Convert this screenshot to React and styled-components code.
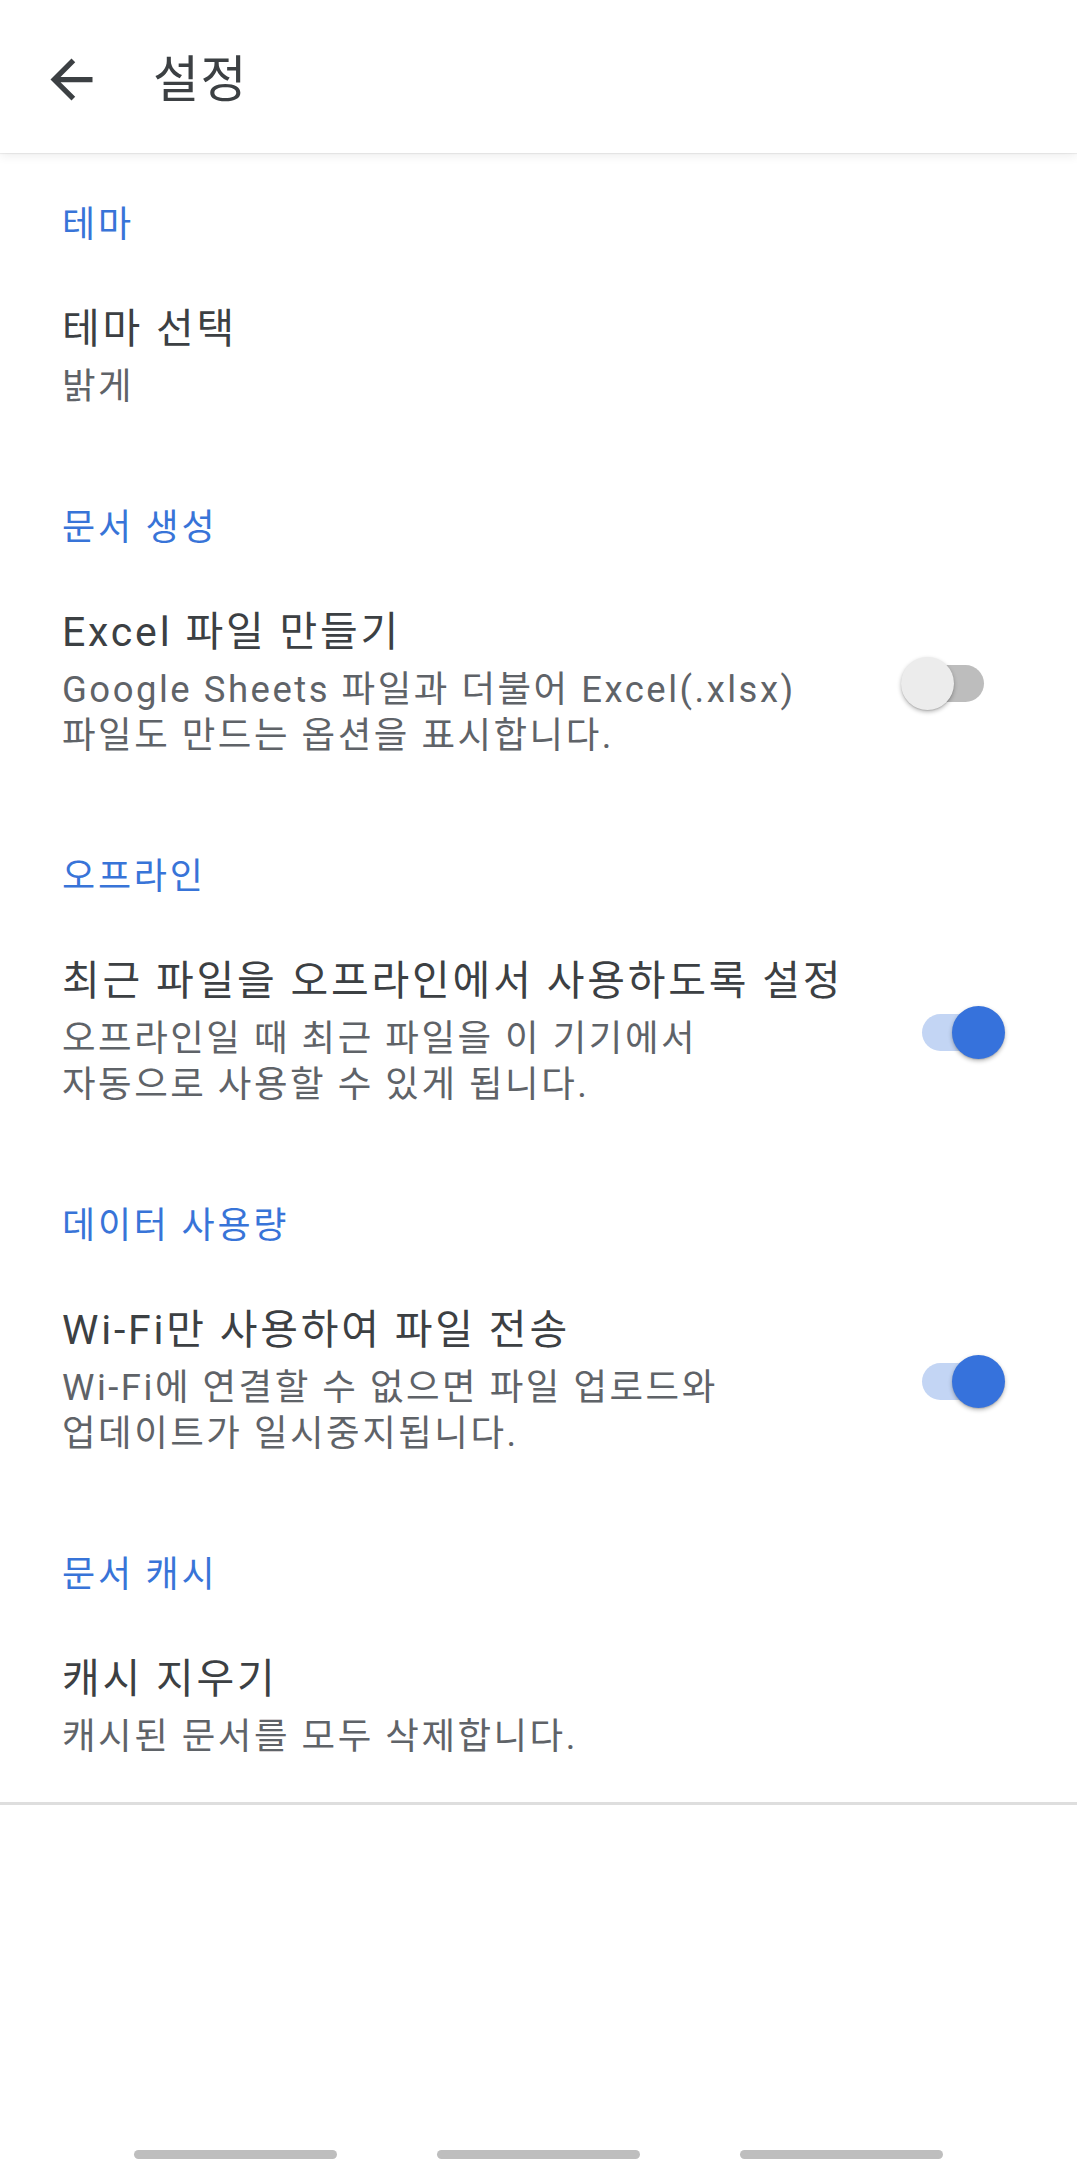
import React from "react";
import styled, { createGlobalStyle } from "styled-components";

const GlobalStyle = createGlobalStyle`
  html, body {
    margin: 0;
    padding: 0;
    background: #ffffff;
  }
  body {
    font-family: Roboto, "Noto Sans CJK KR", sans-serif;
    -webkit-font-smoothing: antialiased;
  }
`;

const TEXT = "#3c4043";
const SUB = "#5f6368";
const BLUE = "#3874d8";

const Page = styled.div`
  min-height: 100vh;
  display: flex;
  flex-direction: column;
  background: #ffffff;
`;

const Toolbar = styled.header`
  height: 153px;
  display: flex;
  align-items: center;
  padding: 6px 0 0 40px;
  box-sizing: border-box;
  background: #ffffff;
  box-shadow: 0 1px 1px rgba(0, 0, 0, 0.06), 0 3px 10px rgba(0, 0, 0, 0.07);
  position: relative;
  z-index: 1;
`;

const BackIcon = styled.svg`
  width: 63px;
  height: 63px;
  fill: ${TEXT};
  flex: none;
`;

const Title = styled.h1`
  margin: 0 0 0 50px;
  font-size: 50px;
  font-weight: 400;
  letter-spacing: 1.5px;
  color: ${TEXT};
  line-height: 1;
`;

const List = styled.main`
  display: flex;
  flex-direction: column;
  padding-top: 1px;
`;

const Category = styled.div`
  padding: 47px 62px 0;
  font-size: 36px;
  line-height: 48px;
  letter-spacing: 2.8px;
  color: ${BLUE};
`;

const Item = styled.div`
  display: flex;
  align-items: center;
  padding: 55px 72px ${(p) => (p.$last ? "42px" : "47px")} 62px;
`;

const Texts = styled.div`
  flex: 1;
  min-width: 0;
`;

const ItemTitle = styled.div`
  font-size: 41px;
  line-height: 50px;
  letter-spacing: 2.8px;
  color: ${TEXT};
  white-space: nowrap;
`;

const Summary = styled.div`
  margin-top: 10px;
  font-size: 36.5px;
  line-height: 46px;
  letter-spacing: 2.5px;
  color: ${SUB};
  white-space: nowrap;
`;

const SwitchBox = styled.div`
  position: relative;
  width: 104px;
  height: 53px;
  flex: none;
`;

const Track = styled.div`
  position: absolute;
  left: 21px;
  top: 8px;
  width: 62px;
  height: 37px;
  border-radius: 19px;
  background: ${(p) => (p.$on ? "#c3d5f4" : "#bdbdbd")};
`;

const Thumb = styled.div`
  position: absolute;
  top: 0;
  left: ${(p) => (p.$on ? "51px" : "0")};
  width: 53px;
  height: 53px;
  border-radius: 50%;
  background: ${(p) => (p.$on ? "#3672dc" : "#ececec")};
  box-shadow: 0 2px 4px rgba(0, 0, 0, 0.28), 0 1px 1px rgba(0, 0, 0, 0.1);
`;

const Divider = styled.hr`
  margin: 0;
  border: none;
  height: 3px;
  background: #dedede;
`;

const Spacer = styled.div`
  flex: 1;
`;

const NavBar = styled.div`
  display: flex;
  justify-content: center;
  gap: 100px;
  padding: 0 0 15px 0;
`;

const NavPill = styled.div`
  width: 203px;
  height: 9px;
  border-radius: 5px;
  background: #bebebe;
`;

function Switch({ on }) {
  return (
    <SwitchBox>
      <Track $on={on} />
      <Thumb $on={on} />
    </SwitchBox>
  );
}

const sections = [
  {
    name: "테마",
    title: "테마 선택",
    summary: ["밝게"],
  },
  {
    name: "문서 생성",
    title: "Excel 파일 만들기",
    summary: ["Google Sheets 파일과 더불어 Excel(.xlsx)", "파일도 만드는 옵션을 표시합니다."],
    toggle: false,
  },
  {
    name: "오프라인",
    title: "최근 파일을 오프라인에서 사용하도록 설정",
    summary: ["오프라인일 때 최근 파일을 이 기기에서", "자동으로 사용할 수 있게 됩니다."],
    toggle: true,
  },
  {
    name: "데이터 사용량",
    title: "Wi-Fi만 사용하여 파일 전송",
    summary: ["Wi-Fi에 연결할 수 없으면 파일 업로드와", "업데이트가 일시중지됩니다."],
    toggle: true,
  },
  {
    name: "문서 캐시",
    title: "캐시 지우기",
    summary: ["캐시된 문서를 모두 삭제합니다."],
  },
];

export default function App() {
  return (
    <Page>
      <GlobalStyle />
      <Toolbar>
        <BackIcon viewBox="0 0 24 24">
          <path d="M20 11H7.83l5.59-5.59L12 4l-8 8 8 8 1.41-1.41L7.83 13H20v-2z" />
        </BackIcon>
        <Title>설정</Title>
      </Toolbar>
      <List>
        {sections.map((s, i) => (
          <section key={s.name}>
            <Category>{s.name}</Category>
            <Item $last={i === sections.length - 1}>
              <Texts>
                <ItemTitle>{s.title}</ItemTitle>
                <Summary>
                  {s.summary.map((line) => (
                    <div key={line}>{line}</div>
                  ))}
                </Summary>
              </Texts>
              {s.toggle !== undefined && <Switch on={s.toggle} />}
            </Item>
          </section>
        ))}
        <Divider />
      </List>
      <Spacer />
      <NavBar>
        <NavPill />
        <NavPill />
        <NavPill />
      </NavBar>
    </Page>
  );
}
